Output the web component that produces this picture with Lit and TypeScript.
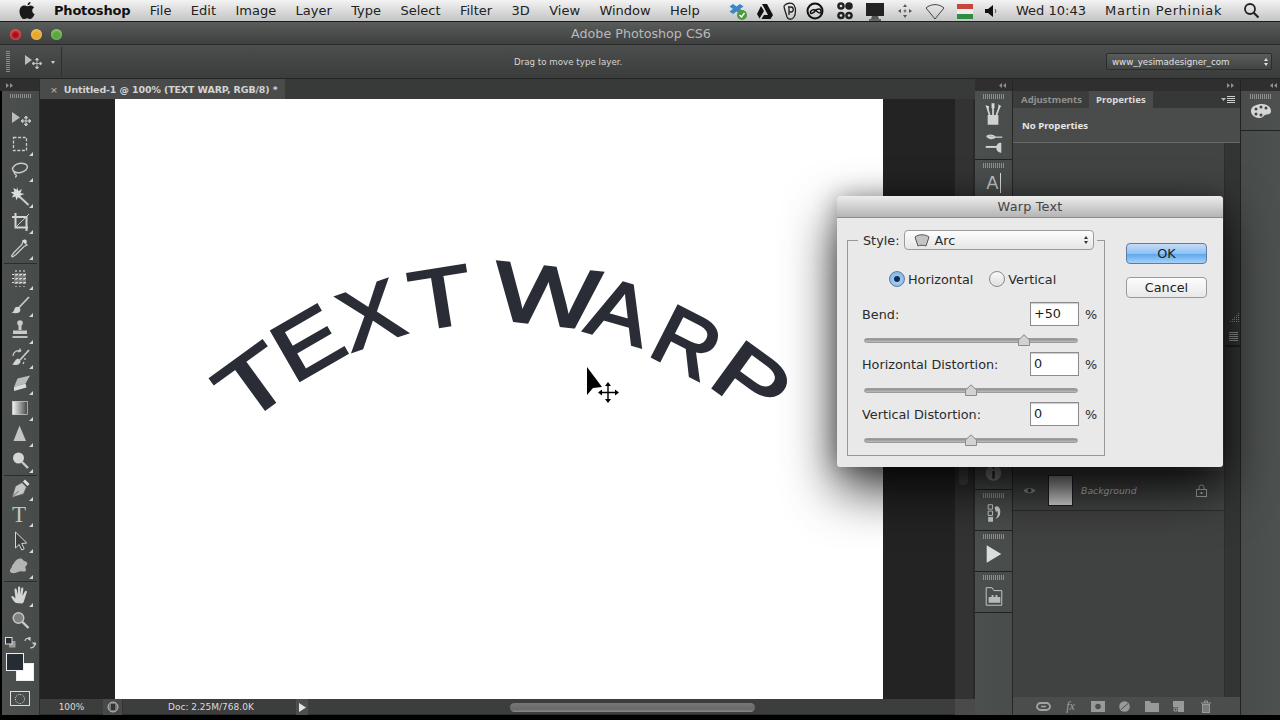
import { LitElement, html, css, svg } from "lit";
import { customElement } from "lit/decorators.js";

const C = "#c9cbc9";
const corner = svg`<path d="M33 21v4h-4z" fill="#d8d8d8"/>`;

const tools: any[] = [
  { h: 26, c: 0, i: svg`<path d="M12 7l8 5.5-8 5.5z" fill="#b9bcba"/><path d="M26 12v8M22 16h8M26 11l-1.6 2h3.2zM26 21l-1.6-2h3.2zM21 16l2-1.6v3.2zM31 16l-2-1.6v3.2z" stroke="${C}" stroke-width="1" fill="${C}"/>` },
  { h: 26, c: 1, i: svg`<rect x="13.5" y="6.5" width="13" height="13" fill="none" stroke="${C}" stroke-width="1.3" stroke-dasharray="3 1.6"/>` },
  { h: 26, c: 1, i: svg`<ellipse cx="20" cy="11" rx="7.5" ry="4.5" fill="none" stroke="${C}" stroke-width="1.5" transform="rotate(-12 20 11)"/><path d="M15 14c-2 2 0 3 1 4s0 2-1 2" fill="none" stroke="${C}" stroke-width="1.3"/>` },
  { h: 26, c: 1, i: svg`<path d="M17 4l1.4 4 3.6-2-1.6 4 4 1-4 1.6 1 3.6-3.4-2-1.6 3-1-3.6-3.6 1 2-3.4-3-1.6 3.6-1-1-3.6 3.4 1.8z" fill="#dcdedc"/><path d="M20 14l8.5 8" stroke="${C}" stroke-width="2"/>` },
  { h: 26, c: 1, i: svg`<path d="M15.5 4v14.5H28M12 8h14.5v14" fill="none" stroke="#d4d6d4" stroke-width="2"/><path d="M15 19L29 5" stroke="${C}" stroke-width="1"/>` },
  { h: 26, c: 1, i: svg`<path d="M23 6l4 4-3 1.5-8 8-3.5 2.5-1-1 2.5-3.5 8-8z" fill="none" stroke="${C}" stroke-width="1.3"/><path d="M22.5 5.5c1.5-1.5 3.5-1.500 4 0s0 3-1 3.5z" fill="#dcdedc"/>` },
  { sep: 4 },
  { h: 27, c: 1, i: svg`<rect x="14" y="8" width="12" height="11" fill="#777"/><path d="M12 9.5h16M12 13.500h16M12 17.500h16M16 5v17M20 5v17M24 5v17" stroke="#dcdedc" stroke-width="1.1" stroke-dasharray="2 2" fill="none"/>` },
  { h: 27, c: 1, i: svg`<path d="M29 5L18.5 16" stroke="${C}" stroke-width="1.8"/><path d="M18 15c3 1 3 4 1 5.5-2 1-5 1-7.500 0 2-.5 2.500-2 3-3.5.5-1.5 2-2.5 3.5-2z" fill="#d4d6d4"/>` },
  { h: 25, c: 1, i: svg`<g transform="translate(0 -2)"><circle cx="20" cy="6" r="2.8" fill="${C}"/><path d="M18.5 8h3v5h-3zM13 13.5h14v3.5h-14z" fill="${C}"/><path d="M12.5 20h15" stroke="#e5e5e5" stroke-width="1.5"/></g>` },
  { h: 26, c: 1, i: svg`<path d="M29 6L20 16" stroke="${C}" stroke-width="1.8"/><path d="M19 15c2 1 2 3.5 0 5s-5 1-7 .5c1.5-.8 2.5-3 3.5-4.3.8-1 2.3-1.7 3.5-1.2z" fill="#d4d6d4"/><path d="M13 12c0-4 4-6.5 8-5M21 7l-1.5-2.5M21 7l-3 1M25 14v2M24 18l-1 2" fill="none" stroke="${C}" stroke-width="1.3"/>` },
  { h: 26, c: 1, i: svg`<path d="M17.5 8.5L30 5.5l-4.5 8-11.5 3.5z" fill="#b9bcba"/><path d="M14 17l11.5-3.5 1 4-12.5 3.5z" fill="#dcdedc"/>` },
  { h: 26, c: 1, i: svg`<defs><linearGradient id="tg" x1="0" x2="1" y1="0" y2="0"><stop offset="0" stop-color="#f4f4f4"/><stop offset="1" stop-color="#444"/></linearGradient></defs><rect x="12.5" y="5.5" width="15" height="13" fill="url(#tg)" stroke="#e8e8e8" stroke-width=".6"/>` },
  { h: 26, c: 1, i: svg`<path d="M19.5 3.5L26 19H13.5z" fill="#c4c6c4"/>` },
  { h: 26, c: 1, i: svg`<circle cx="18.5" cy="10" r="5.5" fill="#d4d6d4"/><path d="M22 14l6 6" stroke="${C}" stroke-width="2.4"/>` },
  { sep: 2 },
  { h: 26, c: 1, i: svg`<path d="M25 3.5l4.5 4.5-2 2-4.5-4.5z" fill="#e0e0e0"/><path d="M22 6.5l4.5 4.5-3 7-11.5 3.5 3.5-11.5zM13.5 20l5-5" fill="#c4c6c4" stroke="#555" stroke-width=".8"/>` },
  { h: 26, c: 1, html: true },
  { h: 26, c: 1, i: svg`<path d="M15.5 4v16l3.7-3.5 2.6 5.500 2.4-1.2-2.5-5.3 5-.5z" fill="#3d403f" stroke="#d8d8d8" stroke-width="1"/>` },
  { h: 26, c: 1, i: svg`<path d="M14 9c2-4 7-6 9-3 1 1.5 3 1 4 2.500s-.5 3-1.500 4 1.500 3 0 4.500-4-.5-6 .5-5 2-7.500 1.500-2.500-3-1-4.500.5-3.500 3-5z" fill="#b2b5b3"/>` },
  { sep: 2 },
  { h: 26, c: 1, i: svg`<path d="M16 21c-2-1-3-3-4.500-5.500-.7-1.200.8-2 1.800-1l2.200 2L14.500 8c-.2-1.500 1.700-2 2.200-.5l1.300 5.500V5.500c0-1.500 2.200-1.500 2.200 0V13l1-6.500c.2-1.500 2.300-1.200 2.100.3L22.500 14l2.300-4.500c.7-1.300 2.500-.6 2 .8L24 19c-.5 1.500-1 2.500-2 2.500z" fill="#d4d6d4"/>` },
  { h: 26, c: 0, i: svg`<circle cx="18.5" cy="10" r="5.3" fill="#7f8280" stroke="#c4c6c4" stroke-width="1.4"/><path d="M22.5 14l6 6" stroke="${C}" stroke-width="2.4"/>` },
];

const menuIcons: any[] = [
  { w: 26, i: svg`<path d="M5 3l3.5 2.5L12 3l3.5 2.500L12 8l3.500 2.500L12 13l-3.500-2.500L5 13 1.500 10.500 5 8 1.500 5.500z" fill="#3d85c6"/><circle cx="14" cy="14" r="5" fill="#4c9b3a"/><path d="M11.500 14l2 2 3-4" stroke="#fff" stroke-width="1.400" fill="none"/>` },
  { w: 28, i: svg`<path d="M7 3h5l6 11h-5zM6 5l3 5-4.500 7.500L2 13zM9 14h9l-2.500 4H6.500z" fill="#111"/>` },
  { w: 22, i: svg`<path d="M4 5c2-3 8-4 10-1s2 9 0 12-6 3-7 0c-1-4-3-8-3-11z" fill="none" stroke="#222" stroke-width="1.300"/><path d="M8 6h3c3 0 3 5 0 5H9m0-5v8" fill="none" stroke="#222" stroke-width="1.300"/>` },
  { w: 28, i: svg`<circle cx="10" cy="10" r="7.500" fill="none" stroke="#111" stroke-width="2"/><path d="M5.500 11.500c0-3 4-3.500 6-1.500s4.500 3 4.500 0-4-2.500-5.500-.5-5 4.500-5 2z" fill="none" stroke="#111" stroke-width="1.500"/>` },
  { w: 32, i: svg`<circle cx="6" cy="5" r="3.800" fill="#222"/><circle cx="14" cy="5" r="3.800" fill="#222"/><circle cx="6" cy="14.500" r="3.800" fill="#222"/><circle cx="14" cy="14.500" r="3.800" fill="#222"/><circle cx="6" cy="5" r="1.300" fill="#ddd"/><circle cx="14" cy="14.500" r="1.300" fill="#ddd"/><circle cx="6" cy="14.500" r="1.300" fill="#ddd"/>` },
  { w: 28, i: svg`<path d="M1 2h18v13H1z" fill="#222"/><path d="M7 15h6l1 3H6z" fill="#555"/><path d="M4 19h12" stroke="#222" stroke-width="1.200"/>` },
  { w: 32, i: svg`<path d="M10 3l2 3h-4zM10 17l2-3H8zM3 10l3-2v4zM17 10l-3-2v4z" fill="#555"/><circle cx="10" cy="10" r="1.400" fill="#777"/>` },
  { w: 28, i: svg`<path d="M1 7c5-4.500 13-4.500 18 0l-9 11z" fill="none" stroke="#444" stroke-width="1"/>` },
  { w: 32, i: svg`<rect x="2" y="3" width="16" height="5" fill="#c8453c"/><rect x="2" y="8" width="16" height="5" fill="#ececec"/><rect x="2" y="13" width="16" height="5" fill="#2f8b46"/>` },
  { w: 20, i: svg`<path d="M4 8h3l5-4v12l-5-4H4z" fill="#111"/><path d="M14 8c1 1 1 3 0 4" stroke="#555" fill="none"/>` },
];

const dockIcons: Record<string, any> = {
  brushes: svg`<rect x="13" y="14" width="11" height="10" fill="#d0d2d0"/><path d="M15 14L12.500 6M18.500 14V4M22 14l3-8" stroke="#d0d2d0" stroke-width="1.800"/><path d="M10.500 4l4 1-1 4zM17 2h3v5h-3zM24 3l3 2-3 3z" fill="#d8dad8"/>`,
  presets: svg`<path d="M12 5c4-2 7-1 9 1h7M12 5c2 3 6 3 9 1" fill="#d0d2d0" stroke="#d0d2d0" stroke-width="1.300"/><path d="M11 16h12" stroke="#d0d2d0" stroke-width="2"/><path d="M22 16c0-3 3-5 5-4v10c-2 .5-5-2-5-4z" fill="#d0d2d0"/>`,
  info: svg`<circle cx="19" cy="13" r="8" fill="#8a8c8a"/><path d="M19 7v2M19 11v8" stroke="#222" stroke-width="2.200"/>`,
  history: svg`<path d="M13.500 4.500h4.500v4.500h-4.500zM13.500 11h4.500v4.500h-4.500z" fill="none" stroke="#cfd1cf"/><rect x="13.500" y="17" width="5" height="5" fill="#c4c6c4"/><path d="M20 7c4-3 6 1 6 5s-2 6-5 7c2-2 3-5 2-8l-1.500 1z" fill="#d4d6d4"/>`,
  play: svg`<path d="M12 4l15 9-15 9z" fill="#dcdedc"/>`,
  comps: svg`<path d="M11.500 5.500h6l2 3h8v15h-16z" fill="none" stroke="#c4c6c4"/><path d="M14 15h3v-2h2v2h2v-2h2v2h3v6H14z" fill="#b8bab8"/>`,
};

@customElement("app-root")
export class AppRoot extends LitElement {
  static styles = css`
    :host { display: block; width: 1280px; height: 720px; background: #000; overflow: hidden; position: relative; font-family: "DejaVu Sans", sans-serif; }
    .app { display: flex; flex-direction: column; width: 1280px; height: 720px; }
    svg { display: block; }

    .menubar { height: 21px; flex: none; display: flex; align-items: center; background: linear-gradient(#f3f3f3, #c4c4c4); border-bottom: 1px solid #1a1a1a; color: #222; font-size: 13px; padding-left: 19px; }
    .apple { width: 17px; margin-right: 18px; flex: none; }
    .menus { display: flex; gap: 19.4px; width: 671px; flex: none; }
    .menus b { font-weight: 700; color: #111; letter-spacing: -.2px; }
    .trayicons { display: flex; }
    .tray { display: flex; justify-content: center; align-items: center; height: 21px; flex: none; }
    .clock { margin-left: 15px; width: 89px; flex: none; }
    .user { width: 118px; flex: none; letter-spacing: .75px; white-space: nowrap; }
    .spot { margin-left: 20px; }

    .titlebar { height: 22px; flex: none; display: flex; align-items: center; position: relative; background: linear-gradient(#5a5c5c, #3e403f); border-bottom: 1px solid #2a2a2a; color: #b8baba; font-size: 12.7px; justify-content: center; padding-left: 2px; }
    .lights { position: absolute; left: 10px; top: 7px; display: flex; gap: 9.5px; }
    .light { width: 11px; height: 11px; border-radius: 50%; }
    .red { background: radial-gradient(circle at 50% 55%, #a3121a 25%, #ef5e64 75%); }
    .yellow { background: radial-gradient(circle at 50% 60%, #e8a82c 35%, #f0c866 80%); }
    .green { background: radial-gradient(circle at 50% 60%, #58a83c 35%, #9ccf80 80%); }

    .options { height: 33px; flex: none; display: flex; align-items: center; background: linear-gradient(#4b4e4d, #3b3d3c); border-bottom: 1px solid #242424; color: #d6d6d6; font-size: 8.7px; }
    .ogrip { width: 4px; height: 22px; margin-left: 6px; background: repeating-linear-gradient(#8a8a8a 0 1px, transparent 1px 2px); flex: none; }
    .otool { margin-left: 15px; flex: none; }
    .odrop { margin-left: 6px; width: 0; height: 0; border: 2.5px solid transparent; border-top: 3px solid #ccc; margin-top: 3px; }
    .odiv { width: 1px; height: 30px; background: #2e2e2e; margin-left: 6px; }
    .hint { margin-left: 452px; width: 592px; flex: none; }
    .preset { width: 166px; height: 17px; box-sizing: border-box; flex: none; background: linear-gradient(#5a5c5b, #434544); border: 1px solid #2c2c2c; border-radius: 2px; display: flex; align-items: center; justify-content: space-between; padding: 0 3px 0 5px; color: #e2e2e2; font-size: 8.7px; }
    .updown { display: flex; flex-direction: column; gap: 2px; }
    .updown i { display: block; width: 0; height: 0; border: 2.5px solid transparent; }
    .updown i:first-child { border-bottom: 3px solid currentColor; border-top-width: 0; }
    .updown i:last-child { border-top: 3px solid currentColor; border-bottom-width: 0; }

    .main { flex: 1; display: flex; min-height: 0; }
    .toolbar { width: 37px; margin-left: 2px; flex: none; display: flex; flex-direction: column; background: linear-gradient(90deg, #4b4f4e, #474b4a); border-right: 1px solid #2b2b2b; }
    .thead { height: 12px; background: #2f2f2f; display: flex; align-items: center; margin-left: -2px; padding-left: 6px; flex: none; }
    .grip { height: 4px; margin: 3px auto 4px; width: 22px; background: repeating-linear-gradient(90deg, #8e8e8e 0 1px, transparent 1px 2px); flex: none; }
    .tpad { height: 3px; flex: none; }
    .tool { flex: none; margin-left: -2px; }
    .tsep { flex: none; display: flex; align-items: center; padding: 0 2px; }
    .tsep i { display: block; height: 1px; flex: 1; background: #2b2d2c; }
    .ttext { width: 38px; height: 26px; margin-left: -2px; flex: none; display: flex; align-items: center; justify-content: center; font: 400 23px "Liberation Serif", serif; color: #c4c6c4; position: relative; }
    .ttext svg { position: absolute; left: 0; top: 0; }
    .swaprow { display: flex; justify-content: space-between; padding: 3px 3px 0 3px; height: 19px; box-sizing: border-box; flex: none; }
    .swatches { display: grid; width: 30px; height: 30px; margin-left: 4px; flex: none; }
    .swatches i { grid-area: 1 / 1; display: block; width: 16px; height: 16px; border: 1px solid #eee; }
    .fg { background: #272b35; z-index: 1; }
    .bg { background: #fff; margin: 10px 0 0 10px; }
    .qmask { margin: 8px 0 0 8px; width: 18px; height: 13px; border: 1px solid #ddd; display: flex; align-items: center; justify-content: center; flex: none; }
    .qmask i { display: block; width: 8px; height: 8px; border-radius: 50%; border: 1px dotted #ddd; }

    .doc { width: 935px; flex: none; display: flex; flex-direction: column; }
    .tabs { height: 20px; flex: none; display: flex; background: #383939; }
    .tab { width: 245px; box-sizing: border-box; background: #494b4a; display: flex; align-items: center; color: #d4d4d4; font-size: 9.45px; font-weight: 700; padding-left: 10px; gap: 6px; letter-spacing: -.1px; }
    .tab span:first-child { color: #bbb; font-weight: 400; }
    .view { flex: 1; display: flex; min-height: 0; background: #232323; }
    .canvas { width: 768px; margin-left: 75px; flex: none; background: #fff; }
    .canvas svg { width: 768px; height: 600px; }
    .gutter { width: 72px; flex: none; }
    .vscroll { width: 18px; flex: none; background: #333; }
    .vthumb { width: 9px; height: 206px; margin: 180px 0 0 4px; background: #4b4b4b; border-radius: 4px; }
    .vborder { width: 2px; flex: none; background: #2a2a2a; }
    .status { height: 16px; flex: none; display: flex; align-items: center; background: #3c3d3d; color: #dcdcdc; font-size: 9px; box-shadow: inset 0 -1px 0 #2c2c2c; }
    .zoomv { width: 63px; text-align: center; flex: none; }
    .stico { width: 20px; height: 16px; flex: none; display: flex; align-items: center; justify-content: center; background: #484a49; border-right: 1px solid #333; box-sizing: border-box; }
    .docinfo { padding-left: 45px; box-sizing: border-box; flex: none; white-space: nowrap; width: 173px; }
    .stplay { width: 12px; height: 16px; flex: none; display: flex; align-items: center; justify-content: center; background: #4d4f4e; }
    .hscroll { flex: 1; display: flex; align-items: center; padding-left: 202px; }
    .hthumb { width: 245px; height: 9px; border-radius: 5px; background: linear-gradient(#777, #6a6a6a 70%, #8a8a8a); }
    .corner { width: 20px; height: 16px; background: #4a4a4a; flex: none; }

    .dock { width: 38px; box-sizing: border-box; flex: none; display: flex; flex-direction: column; background: linear-gradient(90deg, #4b4f4e, #484c4b); border-right: 1px solid #262626; }
    .dhead { height: 12px; flex: none; background: #2f2f2f; display: flex; align-items: center; justify-content: flex-end; padding-right: 6px; }
    .dgroup { display: flex; flex-direction: column; border-bottom: 1px solid #222; flex: none; align-items: center; box-sizing: border-box; }
    .dgroup .grip { margin: 3px auto 0; height: 5px; }
    .dglyph { font-size: 18px; color: #c4c6c4; margin-top: 5px; border-right: 1px solid #ddd; padding-right: 1px; line-height: 20px; }
    .dspace { flex: 1; }
    .dicon { flex: none; margin-top: 2px; }

    .panel { width: 227px; flex: none; display: flex; flex-direction: column; }
    .phead { height: 12px; flex: none; background: #2f2f2f; display: flex; align-items: center; justify-content: flex-end; padding-right: 6px; }
    .ptabs { height: 17px; flex: none; display: flex; background: #363737; align-items: stretch; font: 700 9.6px "Noto Sans", sans-serif; }
    .ptab { padding: 0 7px 0 8px; display: flex; align-items: center; color: #8f9190; background: #3b3c3c; white-space: nowrap; }
    .ptab.on { color: #dcdcdc; background: #4a4c4b; padding: 0 7px; }
    .pmenu { margin-left: auto; margin-right: 5px; align-self: center; }
    .props { height: 34px; flex: none; background: #4a4c4b; border-bottom: 1px solid #676868; display: flex; align-items: center; padding-left: 9px; color: #e6e6e6; font: 700 9.6px "Noto Sans", sans-serif; }
    .pbody { flex: 1; display: flex; min-height: 0; }
    .pleft { flex: 1; display: flex; flex-direction: column; background: #424443; }
    .pspace { height: 328px; flex: none; }
    .lrow { height: 39px; flex: none; display: flex; align-items: center; border-bottom: 1px solid #2c2c2c; background: linear-gradient(#3a3c3b, #444645); color: #bdbdbd; font-size: 9.3px; font-style: italic; }
    .leye { width: 32px; display: flex; justify-content: center; flex: none; }
    .lthumb { width: 25px; height: 31px; margin-left: 3px; flex: none; border: 1px solid #1e1e1e; box-sizing: border-box; background: linear-gradient(#8b8c8c, #dadada); }
    .lname { margin-left: 8px; flex: 1; }
    .llock { margin-right: 17px; flex: none; }
    .pfill { flex: 1; background: #404241; }
    .pscroll { width: 15px; flex: none; background: #333434; display: flex; flex-direction: column; border-left: 1px solid #2e2e2e; }
    .pgrips { margin-top: 169px; padding-left: 4px; }
    .plines { width: 9px; height: 9px; margin-top: 9px; background: repeating-linear-gradient(#9a9a9a 0 1px, transparent 1px 2px); }
    .pdiv { height: 2px; background: #1f1f1f; margin-top: 4px; }
    .pfoot { height: 18px; flex: none; background: #4b4d4c; display: flex; align-items: center; padding-left: 17px; }
    .pfoot span { width: 27px; display: flex; justify-content: center; color: #9ea09f; }
    .fx { font: italic 12px "Liberation Serif", serif; }

    .dock2 { flex: 1; display: flex; flex-direction: column; background: linear-gradient(90deg, #484c4b, #4d5150); border-left: 1px solid #222; }
    .dock2 .dhead { padding-right: 3px; }
    .pal { margin-top: 4px; }
    .bottom { height: 5px; flex: none; background: #000; }

    .dialog { position: absolute; left: 837px; top: 196px; width: 386px; height: 271px; box-sizing: border-box; background: #e9e9e9; border-radius: 4px 4px 3px 3px; box-shadow: 0 22px 52px rgba(0,0,0,.8), 0 0 24px rgba(0,0,0,.3); color: #2b2b2b; font-size: 12.8px; display: flex; flex-direction: column; }
    .dtitle { height: 22px; flex: none; background: linear-gradient(#ededed, #b4b4b4); border-radius: 4px 4px 0 0; border-bottom: 1px solid #8c8c8c; box-sizing: border-box; text-align: center; line-height: 22px; color: #444; letter-spacing: .2px; }
    .dbody { flex: 1; display: flex; padding: 12px 0 0 10px; }
    fieldset { margin: 0; width: 258px; min-width: 0; height: 226px; box-sizing: border-box; border: 1px solid #989898; padding: 0 4px 0 14px; flex: none; }
    legend { padding: 0 3px 0 5px; margin-left: -4px; display: flex; align-items: center; gap: 5px; height: 20px; }
    .sel { width: 190px; height: 20px; box-sizing: border-box; background: linear-gradient(#fdfdfd, #e6e6e6); border: 1px solid #9c9c9c; border-radius: 4px; display: flex; align-items: center; padding: 0 5px 0 9px; gap: 4px; }
    .sel .updown { margin-left: auto; color: #333; }
    .radios { display: flex; align-items: center; margin: 20px 0 14px 27px; height: 18px; }
    .radio { display: flex; align-items: center; gap: 3px; }
    .radio + .radio { margin-left: 16px; }
    .rdot { width: 14px; height: 14px; border-radius: 50%; border: 1px solid #8a8a8a; background: linear-gradient(#f8f8f8, #e0e0e0); display: flex; align-items: center; justify-content: center; flex: none; }
    .rdot.on { background: radial-gradient(circle at 50% 60%, #b9d8f6, #6ea8e0); border-color: #5f7c9c; }
    .rdot.on i { display: block; width: 6px; height: 6px; border-radius: 50%; background: #0f2c52; }
    .field { display: flex; align-items: center; height: 24px; }
    .field label { flex: 1; }
    .input { width: 49px; height: 24px; box-sizing: border-box; background: #fff; border: 1px solid #8c8c8c; box-shadow: inset 0 1px 1px #ccc; padding-left: 3px; line-height: 22px; color: #1a1a1a; }
    .pct { width: 15px; margin-left: 6px; }
    .slider { position: relative; height: 26px; margin: 0 22px 0 2px; display: flex; align-items: center; }
    .track { height: 5px; flex: 1; margin-top: 2px; background: linear-gradient(#8e8e8e, #bdbdbd); border-radius: 3px; border: 1px solid #9c9c9c; box-sizing: border-box; }
    .thumb { position: absolute; top: 8px; margin-left: -6px; }
    .btns { margin: 13px 0 0 21px; display: flex; flex-direction: column; gap: 13px; width: 81px; }
    .btn { height: 21px; box-sizing: border-box; border: 1px solid #9a9a9a; border-radius: 4px; background: linear-gradient(#fdfdfd, #e8e8e8); text-align: center; line-height: 19px; color: #222; }
    .btn.ok { background: linear-gradient(#c5ddf7, #8fc1f2 50%, #5fa8ee 55%, #a6d2f8); border-color: #5e7c9e; }
  `;

  arrows(right: boolean) {
    const d = right ? "M0 0l3 2.5-3 2.5zM4 0l3 2.5-3 2.5z" : "M3 0L0 2.5 3 5zM7 0L4 2.5 7 5z";
    return html`<svg width="7" height="5" viewBox="0 0 7 5"><path d=${d} fill="#8e8e8e"/></svg>`;
  }

  field(label: string, value: string, pos: number) {
    return html`
      <div class="field"><label>${label}</label><div class="input">${value}</div><div class="pct">%</div></div>
      <div class="slider"><div class="track"></div>
        <svg class="thumb" style="left:${pos}px" width="12" height="12" viewBox="0 0 12 12"><path d="M.5 11.5V6L6 .8 11.5 6v5.5z" fill="#d2d2d2" stroke="#8a8a8a"/></svg>
      </div>`;
  }

  render() {
    const menus = ["File", "Edit", "Image", "Layer", "Type", "Select", "Filter", "3D", "View", "Window", "Help"];
    return html`
    <div class="app">
      <div class="menubar">
        <svg class="apple" width="17" height="19" viewBox="0 0 17 19"><path d="M11.5 1c.1 1.5-1.2 3.3-3 3.3C8.300 2.700 9.900 1.200 11.500 1zM8.300 5.200c1 0 1.800-.8 3.300-.8 1.300 0 2.700.7 3.500 2-2.800 1.600-2.300 5.500.6 6.700-.8 2-2.700 4.900-4.400 4.900-1.300 0-1.700-.8-3.200-.8s-2 .8-3.200.8C2.800 18 .5 13.800.5 10.400c0-3.400 2.200-5.800 4.500-5.800 1.400 0 2.400.6 3.300.6z" fill="#1a1a1a"/></svg>
        <div class="menus"><b>Photoshop</b>${menus.map((m) => html`<span>${m}</span>`)}</div>
        <div class="trayicons">${menuIcons.map((t) => html`<div class="tray" style="width:${t.w}px"><svg width="20" height="20" viewBox="0 0 20 20">${t.i}</svg></div>`)}</div>
        <div class="clock">Wed 10:43</div>
        <div class="user">Martin Perhiniak</div>
        <svg class="spot" width="17" height="17" viewBox="0 0 17 17"><circle cx="7" cy="7" r="5" fill="none" stroke="#222" stroke-width="1.8"/><path d="M10.5 10.5l5 5" stroke="#222" stroke-width="2.2"/></svg>
      </div>

      <div class="titlebar">
        <div class="lights"><div class="light red"></div><div class="light yellow"></div><div class="light green"></div></div>
        Adobe Photoshop CS6
      </div>

      <div class="options">
        <div class="ogrip"></div>
        <svg class="otool" width="20" height="16" viewBox="0 0 20 16"><path d="M0 1l7 5-7 5z" fill="#b9bcba"/><path d="M12 5v9M8 9.5h8M12 4l-1.5 2h3zM12 15l-1.5-2h3zM7 9.5l2-1.5v3zM17 9.5l-2-1.5v3z" stroke="#c9cbc9" stroke-width=".8" fill="#c9cbc9"/></svg>
        <div class="odrop"></div>
        <div class="odiv"></div>
        <div class="hint">Drag to move type layer.</div>
        <div class="preset">www_yesimadesigner_com<span class="updown"><i></i><i></i></span></div>
      </div>

      <div class="main">
        <div class="toolbar">
          <div class="thead">${this.arrows(true)}</div>
          <div class="grip"></div>
          <div class="tpad"></div>
          ${tools.map((t) => t.sep
            ? html`<div class="tsep" style="height:${t.sep}px"><i></i></div>`
            : t.html
              ? html`<div class="ttext">T<svg width="38" height="26" viewBox="0 0 38 26">${corner}</svg></div>`
              : html`<svg class="tool" width="38" height=${t.h} viewBox="0 0 38 ${t.h}">${t.i}${t.c ? corner : ""}</svg>`)}
          <div class="swaprow">
            <svg width="11" height="11" viewBox="0 0 11 11"><rect x="4" y="4" width="6.5" height="6.5" fill="#9a9a9a"/><rect x=".5" y=".5" width="6.5" height="6.5" fill="#2a2d33" stroke="#ddd"/></svg>
            <svg width="12" height="12" viewBox="0 0 12 12"><path d="M1 4c0-2 2-3 5-3M6 11c3 0 5-2 5-5M4 1.5L6 0v3zM9 6h4l-2 2z" fill="none" stroke="#ccc" stroke-width="1.2"/></svg>
          </div>
          <div class="swatches"><i class="bg"></i><i class="fg"></i></div>
          <div class="qmask"><i></i></div>
        </div>

        <div class="doc">
          <div class="tabs"><div class="tab"><span>×</span><span>Untitled-1 @ 100% (TEXT WARP, RGB/8) *</span></div></div>
          <div class="view">
            <div class="canvas">
              <svg viewBox="115 99 768 600" font-family="Liberation Sans" font-weight="400" font-size="83" fill="#2a2d36" stroke="#2a2d36" stroke-width="2.6">
                <text transform="translate(270 406) rotate(-36) scale(1.35 1)" text-anchor="middle">T</text>
                <text transform="translate(322 368) rotate(-30) scale(1.2 1)" text-anchor="middle">E</text>
                <text transform="translate(380 342) rotate(-19) scale(1.1 1)" text-anchor="middle">X</text>
                <text transform="translate(445 326) rotate(-9) scale(1.22 1)" text-anchor="middle">T</text>
                <text transform="translate(544 324) rotate(6) scale(1.35 1)" text-anchor="middle">W</text>
                <text transform="translate(612 339) rotate(16) scale(1.08 1)" text-anchor="middle">A</text>
                <text transform="translate(674 368) rotate(27) scale(1.05 1)" text-anchor="middle">R</text>
                <text transform="translate(735 404) rotate(36) scale(1.28 1)" text-anchor="middle">P</text>
                <g stroke="none">
                  <path d="M587 367v28l6-7 9-1z" fill="#000"/>
                  <path d="M608 384v17M600 392.500h17" stroke="#000" stroke-width="1.4"/>
                  <path d="M608 382l-3 4h6zM608 403l-3-4h6zM598 392.500l4-3v6zM619 392.500l-4-3v6z" fill="#000"/>
                </g>
              </svg>
            </div>
            <div class="gutter"></div>
            <div class="vscroll"><div class="vthumb"></div></div>
            <div class="vborder"></div>
          </div>
          <div class="status">
            <div class="zoomv">100%</div>
            <div class="stico"><svg width="12" height="12" viewBox="0 0 12 12"><circle cx="6" cy="6" r="5" fill="#777" stroke="#bbb"/><path d="M4 3h4v6H4z" fill="#333"/></svg></div>
            <div class="docinfo">Doc: 2.25M/768.0K</div>
            <div class="stplay"><svg width="7" height="9" viewBox="0 0 7 9"><path d="M0 0l7 4.5L0 9z" fill="#e4e4e4"/></svg></div>
            <div class="hscroll"><div class="hthumb"></div></div>
            <div class="corner"></div>
          </div>
        </div>

        <div class="dock">
          <div class="dhead">${this.arrows(false)}</div>
          <div class="dgroup" style="height:69px"><div class="grip"></div><svg class="dicon" width="37" height="28" viewBox="0 0 38 28">${dockIcons.brushes}</svg><svg class="dicon" width="37" height="26" viewBox="0 0 38 26">${dockIcons.presets}</svg></div>
          <div class="dgroup" style="height:330px"><div class="grip"></div><div class="dglyph">A</div><div class="dspace"></div><svg class="dicon" width="37" height="26" viewBox="0 0 38 26" style="margin-bottom:3px">${dockIcons.info}</svg></div>
          <div class="dgroup" style="height:41px"><div class="grip"></div><svg class="dicon" width="37" height="26" viewBox="0 0 38 26">${dockIcons.history}</svg></div>
          <div class="dgroup" style="height:41px"><div class="grip"></div><svg class="dicon" width="37" height="26" viewBox="0 0 38 26">${dockIcons.play}</svg></div>
          <div class="dgroup" style="height:41px"><div class="grip"></div><svg class="dicon" width="37" height="26" viewBox="0 0 38 26">${dockIcons.comps}</svg></div>
        </div>

        <div class="panel">
          <div class="phead">${this.arrows(true)}</div>
          <div class="ptabs">
            <div class="ptab">Adjustments</div><div class="ptab on">Properties</div>
            <svg class="pmenu" width="14" height="8" viewBox="0 0 14 8"><path d="M0 2h5L2.5 5z" fill="#bbb"/><path d="M6 .5h8M6 2.5h8M6 4.5h8M6 6.5h8" stroke="#ccc"/></svg>
          </div>
          <div class="props">No Properties</div>
          <div class="pbody">
            <div class="pleft">
              <div class="pspace"></div>
              <div class="lrow">
                <div class="leye"><svg width="13" height="9" viewBox="0 0 13 9"><path d="M.5 4.5C3 1 10 1 12.5 4.5 10 8 3 8 .5 4.5z" fill="#8a8c8b"/><circle cx="6.5" cy="4.5" r="2" fill="#2c2c2c"/></svg></div>
                <div class="lthumb"></div>
                <div class="lname">Background</div>
                <svg class="llock" width="11" height="13" viewBox="0 0 11 13"><path d="M3 5V3.5a2.500 2.500 0 0 1 5 0V5" fill="none" stroke="#a8a8a8"/><rect x=".5" y="5.5" width="10" height="7" fill="none" stroke="#a8a8a8"/><rect x="4.5" y="8" width="2" height="2" fill="#a8a8a8"/></svg>
              </div>
              <div class="pfill"></div>
            </div>
            <div class="pscroll">
              <div class="pgrips">
                <svg width="11" height="11" viewBox="0 0 11 11"><path d="M9 1h1v1H9zM7 3h1v1H7zM9 3h1v1H9zM5 5h1v1H5zM7 5h1v1H7zM9 5h1v1H9zM3 7h1v1H3zM5 7h1v1H5zM7 7h1v1H7zM9 7h1v1H9zM1 9h1v1H1zM3 9h1v1H3zM5 9h1v1H5zM7 9h1v1H7zM9 9h1v1H9z" fill="#8a8a8a"/></svg>
                <div class="plines"></div>
              </div>
              <div class="pdiv"></div>
            </div>
          </div>
          <div class="pfoot">
            <span><svg width="15" height="9" viewBox="0 0 15 9"><rect x="1" y="1" width="13" height="7" rx="3.5" fill="none" stroke="#a2a4a3" stroke-width="1.8"/><path d="M5 4.5h5" stroke="#a2a4a3" stroke-width="1.5"/></svg></span>
            <span class="fx">fx</span>
            <span><svg width="14" height="11" viewBox="0 0 14 11"><rect width="14" height="11" fill="#989a99"/><circle cx="7" cy="5.5" r="2.8" fill="#4c4e4d"/></svg></span>
            <span><svg width="11" height="11" viewBox="0 0 11 11"><circle cx="5.5" cy="5.5" r="5.3" fill="#989a99"/><path d="M2 8.5L9 2.500" stroke="#4b4d4c"/></svg></span>
            <span><svg width="14" height="11" viewBox="0 0 14 11"><path d="M0 0h5l1 2h8v9H0z" fill="#989a99"/></svg></span>
            <span><svg width="11" height="11" viewBox="0 0 11 11"><rect width="11" height="11" fill="#989a99"/><path d="M0 6h5v5H0z" fill="#4b4d4c"/><path d="M1 7h3v3H1z" fill="none" stroke="#bbb" stroke-width=".7"/></svg></span>
            <span><svg width="12" height="13" viewBox="0 0 12 13"><path d="M1 3h10M4.5 3V1h3v2" fill="none" stroke="#989a99"/><path d="M2 4h8v9H2z" fill="#989a99"/><path d="M4 5v7M6 5v7M8 5v7" stroke="#4b4d4c" stroke-width=".8"/></svg></span>
          </div>
        </div>

        <div class="dock2">
          <div class="dhead">${this.arrows(false)}</div>
          <div class="dgroup" style="height:40px;width:100%"><div class="grip"></div><svg class="pal" width="22" height="16" viewBox="0 0 22 16"><path d="M1 8c0-5 6-7 11-7s9 3 9 7-4 3-6 4-2 3-6 3S1 12 1 8z" fill="#d4d6d4"/><circle cx="6" cy="6" r="1.5" fill="#444"/><circle cx="11" cy="4" r="1.5" fill="#444"/><circle cx="16" cy="5" r="1.5" fill="#444"/><circle cx="6" cy="11" r="1.5" fill="#444"/><circle cx="11" cy="12" r="1.5" fill="#444"/></svg></div>
        </div>
      </div>
      <div class="bottom"></div>
    </div>

    <div class="dialog">
      <div class="dtitle">Warp Text</div>
      <div class="dbody">
        <fieldset>
          <legend>Style:
            <div class="sel">
              <svg width="16" height="13" viewBox="0 0 16 13"><path d="M1 3c4-3 10-3 14 0l-3 9c-2-1-6-1-8 0z" fill="#c4c4c4" stroke="#555"/></svg>
              Arc
              <span class="updown"><i></i><i></i></span>
            </div>
          </legend>
          <div class="radios">
            <div class="radio"><div class="rdot on"><i></i></div>Horizontal</div>
            <div class="radio"><div class="rdot"></div>Vertical</div>
          </div>
          ${this.field("Bend:", "+50", 160)}
          ${this.field("Horizontal Distortion:", "0", 107)}
          ${this.field("Vertical Distortion:", "0", 107)}
        </fieldset>
        <div class="btns"><div class="btn ok">OK</div><div class="btn">Cancel</div></div>
      </div>
    </div>`;
  }
}
